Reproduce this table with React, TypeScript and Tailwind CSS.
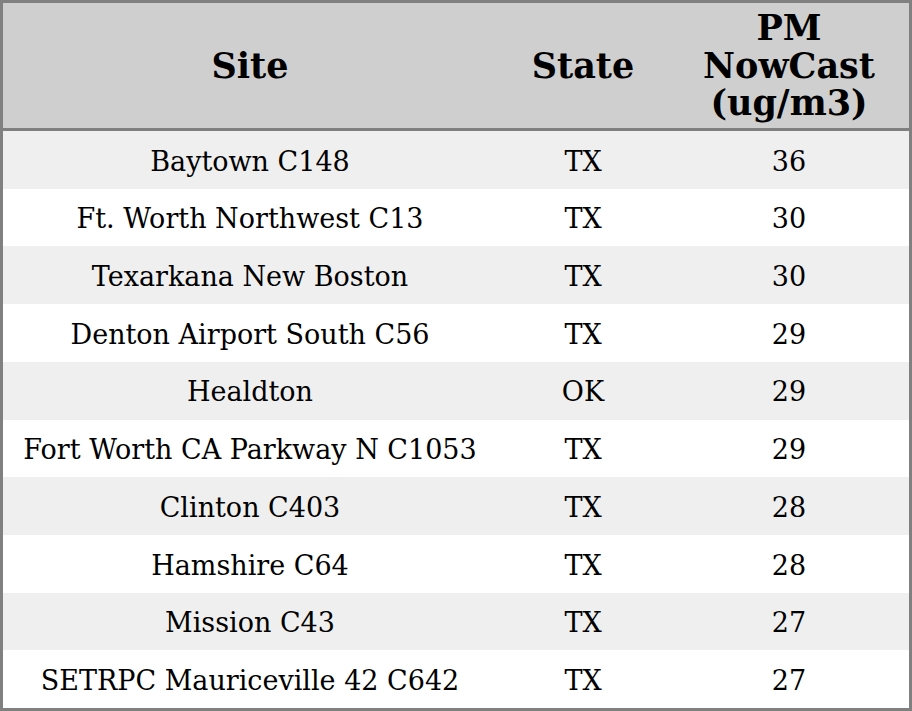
const rows: [string, string, number][] = [
  ["Baytown C148", "TX", 36],
  ["Ft. Worth Northwest C13", "TX", 30],
  ["Texarkana New Boston", "TX", 30],
  ["Denton Airport South C56", "TX", 29],
  ["Healdton", "OK", 29],
  ["Fort Worth CA Parkway N C1053", "TX", 29],
  ["Clinton C403", "TX", 28],
  ["Hamshire C64", "TX", 28],
  ["Mission C43", "TX", 27],
  ["SETRPC Mauriceville 42 C642", "TX", 27],
];

export default function App() {
  return (
    <div className="w-[912px] h-[711px] bg-white font-['DejaVu_Serif',serif] text-black">
      <div className="border-[3px] border-[#808080] h-full flex flex-col">
        <div className="h-[125px] bg-[#cfcfcf] border-b-[3px] border-[#808080] box-content grid grid-cols-[494px_172px_1fr] items-center text-center font-bold text-[35px] leading-[37.5px]">
          <div>Site</div>
          <div>State</div>
          <div>
            PM
            <br />
            NowCast
            <br />
            (ug/m3)
          </div>
        </div>
        <div className="flex-1 flex flex-col">
          {rows.map(([site, state, val], i) => (
            <div
              key={site}
              className={`flex-1 pt-[4px] grid grid-cols-[494px_172px_1fr] items-center text-center text-[27px] ${
                i % 2 === 0 ? "bg-[#efefef]" : "bg-white"
              }`}
            >
              <div>{site}</div>
              <div>{state}</div>
              <div>{val}</div>
            </div>
          ))}
        </div>
      </div>
    </div>
  );
}
